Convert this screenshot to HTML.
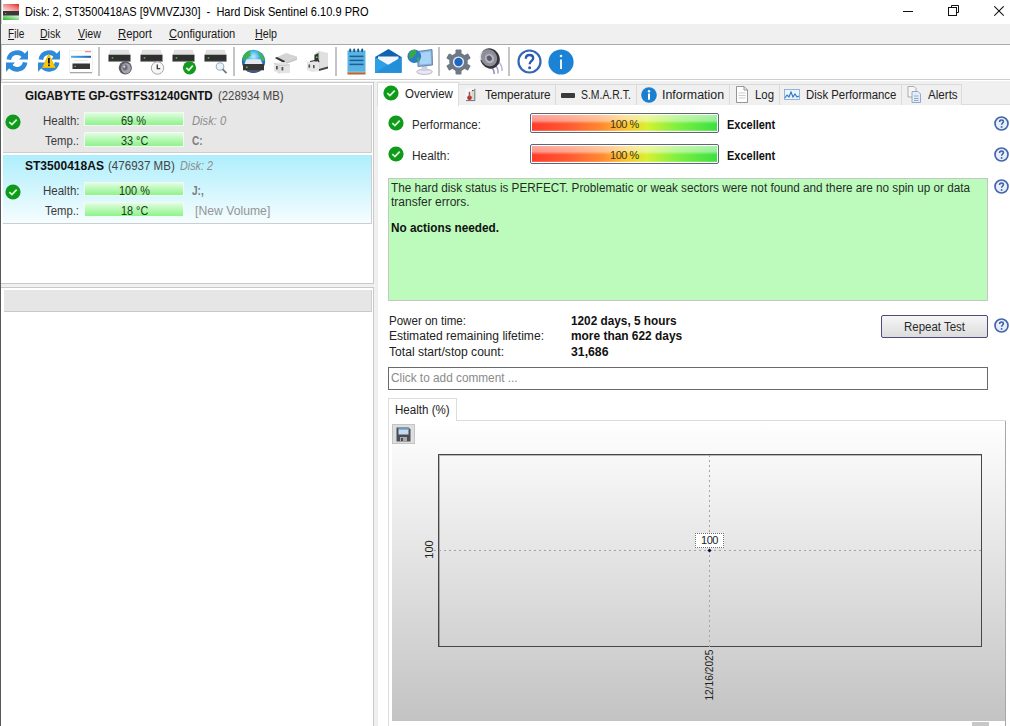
<!DOCTYPE html>
<html><head><meta charset="utf-8">
<style>
*{margin:0;padding:0;box-sizing:border-box}
html,body{width:1010px;height:726px;overflow:hidden;background:#fff;font-family:"Liberation Sans",sans-serif;font-size:12px;color:#000}
.a{position:absolute}
.t{position:absolute;white-space:nowrap;line-height:1}
.bar{position:absolute;width:100px;height:14px;border:1px solid #effcef;background:linear-gradient(#e2fde2 0%,#c4f9c2 35%,#8ef48b 100%)}
.tab{position:absolute;top:84px;height:21px;border:1px solid #dadada;border-bottom:none;background:#f0f0f0}
.sep{position:absolute;top:47px;width:2px;height:29px;background:#c4c4c4}
</style></head><body>
<div class="a" style="left:0;top:0;width:1px;height:726px;background:#55595d"></div>
<div class="a" style="left:1px;top:0;width:1px;height:726px;background:rgba(0,0,0,0.18)"></div>
<svg class="a" style="left:3px;top:4px" width="16" height="16" viewBox="0 0 16 16"><defs><linearGradient id="ti1" x1="0" y1="1" x2="1" y2="0"><stop offset="0" stop-color="#fbe8e8"/><stop offset="0.6" stop-color="#f08080"/><stop offset="1" stop-color="#e42020"/></linearGradient><linearGradient id="ti2" x1="0" y1="1" x2="1" y2="0"><stop offset="0" stop-color="#28b428"/><stop offset="1" stop-color="#e8f8e8"/></linearGradient></defs><rect x="0" y="0" width="16" height="7" fill="url(#ti1)"/><rect x="0" y="7" width="16" height="5" fill="#383838"/><rect x="0" y="11.5" width="16" height="4.5" fill="url(#ti2)"/><rect x="2" y="9" width="1.2" height="1" fill="#8a8"/></svg>
<div class="t" style="left:24.50px;top:6px;font-size:12px;color:#000;transform:scaleX(0.9198);transform-origin:0 0;">Disk: 2, ST3500418AS [9VMVZJ30]&nbsp; -&nbsp; Hard Disk Sentinel 6.10.9 PRO</div>
<div class="a" style="left:903px;top:11px;width:10px;height:1px;background:#111"></div>
<svg class="a" style="left:946px;top:3px" width="14" height="14"><path d="M5.5 4.5V2.5H12.5V9.5H10.5" fill="none" stroke="#111"/><rect x="2.5" y="4.5" width="8" height="8" fill="none" stroke="#111"/></svg>
<svg class="a" style="left:994px;top:6px" width="11" height="11"><path d="M0.3 0.3L9.7 9.7M9.7 0.3L0.3 9.7" stroke="#111" stroke-width="1.05"/></svg>
<div class="a" style="left:1px;top:24px;width:1009px;height:20px;background:#f0f0f0"></div>
<div class="a" style="left:1px;top:44px;width:1009px;height:1px;background:#a9a9a9"></div>
<div class="t" style="left:7.70px;top:28px;font-size:12px;color:#1a1a1a;transform:scaleX(0.8400);transform-origin:0 0;"><span style="text-decoration:underline;text-underline-offset:1px">F</span>ile</div>
<div class="t" style="left:40.40px;top:28px;font-size:12px;color:#1a1a1a;transform:scaleX(0.8761);transform-origin:0 0;"><span style="text-decoration:underline;text-underline-offset:1px">D</span>isk</div>
<div class="t" style="left:78.00px;top:28px;font-size:12px;color:#1a1a1a;transform:scaleX(0.8873);transform-origin:0 0;"><span style="text-decoration:underline;text-underline-offset:1px">V</span>iew</div>
<div class="t" style="left:118.00px;top:28px;font-size:12px;color:#1a1a1a;transform:scaleX(0.9444);transform-origin:0 0;"><span style="text-decoration:underline;text-underline-offset:1px">R</span>eport</div>
<div class="t" style="left:169.40px;top:28px;font-size:12px;color:#1a1a1a;transform:scaleX(0.9286);transform-origin:0 0;"><span style="text-decoration:underline;text-underline-offset:1px">C</span>onfiguration</div>
<div class="t" style="left:254.70px;top:28px;font-size:12px;color:#1a1a1a;transform:scaleX(0.8900);transform-origin:0 0;"><span style="text-decoration:underline;text-underline-offset:1px">H</span>elp</div>
<div class="a" style="left:1px;top:79px;width:1009px;height:1px;background:#cdcdcd"></div>
<svg class="a" style="left:6px;top:50px" width="22" height="22" viewBox="0 0 22 22"><path d="M2.82 9.6A8.3 8.3 0 0 1 18.2 6.85" fill="none" stroke="#2f8bd8" stroke-width="4.6"/><path d="M13 9.6L22 9.6L22 0.3Z" fill="#2f8bd8"/><path d="M19.18 12.4A8.3 8.3 0 0 1 3.8 15.15" fill="none" stroke="#2f8bd8" stroke-width="4.6"/><path d="M9 12.4L0 12.4L0 21.7Z" fill="#2f8bd8"/></svg>
<svg class="a" style="left:38px;top:50px" width="22" height="22" viewBox="0 0 22 22"><path d="M2.82 9.6A8.3 8.3 0 0 1 18.2 6.85" fill="none" stroke="#2f8bd8" stroke-width="4.6"/><path d="M13 9.6L22 9.6L22 0.3Z" fill="#2f8bd8"/><path d="M19.18 12.4A8.3 8.3 0 0 1 3.8 15.15" fill="none" stroke="#2f8bd8" stroke-width="4.6"/><path d="M9 12.4L0 12.4L0 21.7Z" fill="#2f8bd8"/><path d="M10.8 4.5L17 17.5L4.6 17.5Z" fill="#f6c814" stroke="#f0b800" stroke-width="1" stroke-linejoin="round"/><rect x="10" y="8" width="1.8" height="5.5" fill="#1a1a1a"/><rect x="10" y="14.5" width="1.8" height="1.6" fill="#1a1a1a"/></svg>
<svg class="a" style="left:69px;top:50px" width="24" height="24" viewBox="0 0 24 24"><defs><linearGradient id="bl3" x1="0" x2="1"><stop offset="0" stop-color="#48b8e8"/><stop offset="1" stop-color="#1f5fb8"/></linearGradient></defs><rect x="0.5" y="0.5" width="23" height="22" fill="#fdfdfd" stroke="#f0f0f0"/><rect x="16" y="1.2" width="6" height="1" fill="#e87070"/><rect x="2" y="5.8" width="20" height="2" fill="url(#bl3)"/><rect x="5" y="10" width="14" height="0.8" fill="#e8e8e8"/><rect x="3.5" y="13.5" width="17.5" height="5.5" fill="#363636"/><rect x="5.5" y="15.8" width="1.3" height="1.3" fill="#6c6"/><rect x="1" y="22" width="22" height="1.3" fill="#a8a8a8"/></svg>
<div class="sep" style="left:98px"></div>
<svg class="a" style="left:108px;top:49px" width="25" height="26" viewBox="0 0 25 26"><path d="M2.3 0.8L20.7 0.8L22.3 5.7L0.7 5.7Z" fill="#e0e0e0"/><rect x="0.5" y="5.7" width="22" height="6.8" fill="#2f2f2f"/><rect x="0.5" y="11.9" width="22" height="0.8" fill="#8a8a8a"/><rect x="3.7" y="8.1" width="1.6" height="1.6" fill="#4fb84f"/><circle cx="17.3" cy="18.8" r="6.6" fill="#5a5a62"/><ellipse cx="18" cy="19.2" rx="4.8" ry="5.2" fill="#a4a4ae"/><ellipse cx="17" cy="18.5" rx="2.6" ry="3" fill="#6e6e78"/><ellipse cx="16.2" cy="17.6" rx="1.1" ry="1.2" fill="#d8d8de"/></svg>
<svg class="a" style="left:140px;top:49px" width="25" height="26" viewBox="0 0 25 26"><path d="M2.3 0.8L20.7 0.8L22.3 5.7L0.7 5.7Z" fill="#e0e0e0"/><rect x="0.5" y="5.7" width="22" height="6.8" fill="#2f2f2f"/><rect x="0.5" y="11.9" width="22" height="0.8" fill="#8a8a8a"/><rect x="3.7" y="8.1" width="1.6" height="1.6" fill="#4fb84f"/><circle cx="17.5" cy="19" r="6.2" fill="#f6f6f6" stroke="#a8a8a8" stroke-width="1"/><path d="M17.3 15.5V19.6H20.2" fill="none" stroke="#3a3a3a" stroke-width="1.3"/></svg>
<svg class="a" style="left:172px;top:49px" width="25" height="26" viewBox="0 0 25 26"><path d="M2.3 0.8L20.7 0.8L22.3 5.7L0.7 5.7Z" fill="#e0e0e0"/><rect x="0.5" y="5.7" width="22" height="6.8" fill="#2f2f2f"/><rect x="0.5" y="11.9" width="22" height="0.8" fill="#8a8a8a"/><rect x="3.7" y="8.1" width="1.6" height="1.6" fill="#4fb84f"/><circle cx="17.5" cy="18.8" r="6.6" fill="#139a1e"/><path d="M14.3 18.9L16.7 21.2L20.8 16.6" fill="none" stroke="#e4fbe2" stroke-width="1.7"/></svg>
<svg class="a" style="left:204px;top:49px" width="25" height="26" viewBox="0 0 25 26"><path d="M2.3 0.8L20.7 0.8L22.3 5.7L0.7 5.7Z" fill="#e0e0e0"/><rect x="0.5" y="5.7" width="22" height="6.8" fill="#2f2f2f"/><rect x="0.5" y="11.9" width="22" height="0.8" fill="#8a8a8a"/><rect x="3.7" y="8.1" width="1.6" height="1.6" fill="#4fb84f"/><circle cx="16" cy="17.5" r="3.8" fill="#eaf2fb" stroke="#9ab0c8" stroke-width="1.1"/><path d="M18.6 20.2L22.5 24.2" stroke="#777" stroke-width="1.8"/></svg>
<div class="sep" style="left:233px"></div>
<svg class="a" style="left:241px;top:49px" width="25" height="26" viewBox="0 0 25 26"><defs><radialGradient id="glb" cx="0.5" cy="0.3" r="0.65"><stop offset="0" stop-color="#b8f0ff"/><stop offset="0.45" stop-color="#36a8e0"/><stop offset="1" stop-color="#1a4a98"/></radialGradient></defs><circle cx="12.5" cy="12.3" r="11.6" fill="url(#glb)"/><path d="M1.5 10C2.5 5 6 2 9 1.5C10 3 8.5 5 10 6.5C8 8 5 9 3 12Z" fill="#3cb43c" opacity="0.9"/><path d="M17 2.5C20 4 23 7.5 23.8 11.5C22 12.5 20 11 19.5 8.5C18.5 6.5 16.5 5 17 2.5Z" fill="#48b848" opacity="0.9"/><path d="M3.5 15L5.5 10.3L19.5 10.3L21.5 15Z" fill="#e4e8ec"/><rect x="2" y="15" width="21" height="6.3" fill="#363636"/><rect x="5" y="17.5" width="1.6" height="1.6" fill="#50c050"/><path d="M4.5 21.3C8 24.5 17 24.5 20.5 21.3Z" fill="#4a5a70"/></svg>
<svg class="a" style="left:273px;top:52px" width="25" height="23" viewBox="0 0 25 23"><path d="M2 6L13 1L24 4.5L24 8L13 12Z" fill="#d4d4d4"/><path d="M2 6L13 11L24 7" fill="none" stroke="#bbb" stroke-width="0.8"/><path d="M2 6L4 5L12 9L11 11Z" fill="#333"/><path d="M1 11L12 10L17 13L17 21L6 21.5L1 19Z" fill="#e4e4e4"/><path d="M1 11L6 13.5L17 13" fill="none" stroke="#c4c4c4" stroke-width="0.8"/><rect x="3" y="14" width="1.8" height="3.5" fill="#555"/><rect x="8.5" y="15" width="1.8" height="3.5" fill="#555"/><path d="M6 13.5V21.5" stroke="#cfcfcf" stroke-width="0.8"/></svg>
<svg class="a" style="left:306px;top:50px" width="25" height="24" viewBox="0 0 25 24"><path d="M8 4L13 1L22 3L22 17L13 20L8 17Z" fill="#e0e0e0"/><path d="M13 1V20" stroke="#c8c8c8" stroke-width="0.8"/><path d="M8.5 5L12.5 3L12.5 11L8.5 12Z" fill="#2a3a2a"/><rect x="10" y="6.5" width="1.5" height="1.5" fill="#6c6"/><path d="M1 12L8 11L13 13L13 21L6 22L1 20Z" fill="#e6e6e6"/><path d="M4 11.5L12 10L13 12" fill="none" stroke="#333" stroke-width="1.2"/><rect x="2.5" y="14.5" width="1.6" height="3.2" fill="#555"/><rect x="7" y="15" width="1.6" height="3.2" fill="#555"/><path d="M13 19L22 16.5V18.5L13 21Z" fill="#444"/></svg>
<div class="sep" style="left:335px"></div>
<svg class="a" style="left:346px;top:48px" width="21" height="27" viewBox="0 0 21 27"><rect x="1.5" y="2.5" width="18" height="22.5" fill="#58b4e4"/><rect x="1.5" y="23.8" width="18" height="1.6" fill="#f0f0f0"/><rect x="1.5" y="24.3" width="18" height="2.2" fill="#b06a32"/><rect x="3.3" y="0.6" width="1.8" height="3.6" rx="0.9" fill="#1f4f7a"/><rect x="7.3" y="0.6" width="1.8" height="3.6" rx="0.9" fill="#1f4f7a"/><rect x="11.3" y="0.6" width="1.8" height="3.6" rx="0.9" fill="#1f4f7a"/><rect x="15.3" y="0.6" width="1.8" height="3.6" rx="0.9" fill="#1f4f7a"/><rect x="3.5" y="7.6" width="14" height="1.6" fill="#1f5f95"/><rect x="3.5" y="11.6" width="14" height="1.6" fill="#1f5f95"/><rect x="3.5" y="15.6" width="14" height="1.6" fill="#1f5f95"/></svg>
<svg class="a" style="left:375px;top:48px" width="27" height="26" viewBox="0 0 27 26"><path d="M0 9L13.5 1L26.5 9L26.5 24.8L0 24.8Z" fill="#0f64b0"/><path d="M3 8.5L23.5 8.5L23.5 17L13.5 22L3 17Z" fill="#f2f6fb"/><path d="M0 9L13.5 17L26.5 9L26.5 24.8L0 24.8Z" fill="#2e9fe6"/><path d="M0 24.8L26.5 24.8L13.5 16.5Z" fill="#2590da"/><path d="M13.5 16.5L26.5 24.8L26.5 9Z" fill="#1c7fcc" opacity="0.55"/></svg>
<svg class="a" style="left:407px;top:48px" width="27" height="27" viewBox="0 0 27 27"><ellipse cx="17.5" cy="23.8" rx="7.8" ry="2.6" fill="#e8e8f2" stroke="#a8a8c0" stroke-width="0.8"/><path d="M15 17.5L20 17.5L21 23L14 23Z" fill="#d0d0e4"/><path d="M10.5 3.5L25 1.5L25.5 17L11 18.5Z" fill="#8ab4dc" stroke="#5a7aa8" stroke-width="0.9"/><path d="M12.5 5L23.5 3.5L24 15.5L13 16.5Z" fill="#a8d4f8"/><circle cx="7.3" cy="8.3" r="6.8" fill="#2a7cc8"/><path d="M2 6C3 3 6 1.5 8.5 1.8C10 3 9.5 5.5 8 7C6.5 8.5 5 11.5 2.5 11Z" fill="#3aa845"/><path d="M10 9C12 9 13 11 12.5 13L10 13Z" fill="#3aa845"/></svg>
<div class="sep" style="left:438px"></div>
<svg class="a" style="left:445px;top:49px" width="27" height="26" viewBox="0 0 27 26"><rect x="10.5" y="0.5" width="6" height="6" rx="1" fill="#6f7985" transform="rotate(0 13.5 13)"/><rect x="10.5" y="0.5" width="6" height="6" rx="1" fill="#6f7985" transform="rotate(60 13.5 13)"/><rect x="10.5" y="0.5" width="6" height="6" rx="1" fill="#6f7985" transform="rotate(120 13.5 13)"/><rect x="10.5" y="0.5" width="6" height="6" rx="1" fill="#6f7985" transform="rotate(180 13.5 13)"/><rect x="10.5" y="0.5" width="6" height="6" rx="1" fill="#6f7985" transform="rotate(240 13.5 13)"/><rect x="10.5" y="0.5" width="6" height="6" rx="1" fill="#6f7985" transform="rotate(300 13.5 13)"/><circle cx="13.5" cy="13" r="9.3" fill="#6f7985"/><circle cx="13.5" cy="13" r="5.6" fill="#e8eef4"/><circle cx="13.5" cy="13" r="4.2" fill="#1f66c2"/></svg>
<svg class="a" style="left:478px;top:48px" width="26" height="27" viewBox="0 0 26 27"><path d="M13 19C15.5 21 16.5 23 16 26" fill="none" stroke="#9090c0" stroke-width="1.6"/><path d="M17 17C19.5 19.5 20.5 22 20 25.5" fill="none" stroke="#a4a4d0" stroke-width="1.5"/><path d="M20.5 13.5C23 16.5 24.5 19.5 24 23" fill="none" stroke="#b4b4dc" stroke-width="1.4"/><ellipse cx="12" cy="10.5" rx="9.5" ry="10.5" transform="rotate(-35 12 10.5)" fill="#35353c"/><ellipse cx="11" cy="9.8" rx="7.8" ry="8.8" transform="rotate(-35 11 9.8)" fill="#8e8e98"/><ellipse cx="11.5" cy="10.5" rx="4.5" ry="5" transform="rotate(-35 11.5 10.5)" fill="#b4b4c0"/><ellipse cx="11.3" cy="10.3" rx="2.4" ry="2.8" transform="rotate(-35 11.3 10.3)" fill="#5c5c68"/><path d="M4 4C2 6.5 2 9.5 3 12" fill="none" stroke="#e4e4ec" stroke-width="1.4"/></svg>
<div class="sep" style="left:508px"></div>
<svg class="a" style="left:517px;top:49px" width="25" height="25" viewBox="0 0 25 25"><circle cx="12.5" cy="12.5" r="11" fill="#fff" stroke="#3266b8" stroke-width="2.2"/><path d="M8.8 9.8C8.8 7.2 10.5 6 12.5 6C14.6 6 16.2 7.3 16.2 9.3C16.2 11.7 12.6 12.1 12.6 15.3" fill="none" stroke="#2a5aa8" stroke-width="2.3"/><circle cx="12.6" cy="18.7" r="1.5" fill="#2a5aa8"/></svg>
<svg class="a" style="left:548px;top:49px" width="26" height="26" viewBox="0 0 26 26"><circle cx="13" cy="13" r="12.6" fill="#1c82d6"/><rect x="12" y="10.5" width="2" height="9.5" fill="#e8f4ff"/><circle cx="13" cy="7" r="1.3" fill="#e8f4ff"/></svg>
<div class="a" style="left:1px;top:81px;width:373px;height:646px;background:#f0f0f0"></div>
<div class="a" style="left:1px;top:82px;width:373px;height:202px;border:1px solid #c9c9c9;border-left:none;background:#fff"></div>
<div class="a" style="left:3px;top:85px;width:369px;height:68px;background:#e7e7e7;border-right:1px solid #cdcdcd;border-bottom:1px solid #cdcdcd"></div>
<div class="a" style="left:3px;top:155px;width:369px;height:69px;background:linear-gradient(#aeeefc,#f6fdff);border-right:1px solid #cdcdcd;border-bottom:1px solid #cdcdcd"></div>
<div class="t" style="left:25.30px;top:90px;font-size:12px;color:#111;transform:scaleX(0.9638);transform-origin:0 0;font-weight:bold;">GIGABYTE GP-GSTFS31240GNTD</div>
<div class="t" style="left:217.90px;top:90px;font-size:12px;color:#444;transform:scaleX(0.9443);transform-origin:0 0;">(228934 MB)</div>
<svg class="a" style="left:5px;top:114px" width="16" height="16" viewBox="0 0 16 16"><circle cx="8" cy="8" r="7.6" fill="#109a1c"/><path d="M4.3 8.2L6.9 10.6L11.7 5.6" fill="none" stroke="#d9fbd6" stroke-width="1.7"/></svg>
<div class="t" style="left:42.50px;top:115px;font-size:12px;color:#3a3a3a;transform:scaleX(0.9595);transform-origin:0 0;">Health:</div>
<div class="bar" style="left:84px;top:112px;height:14px"></div>
<div class="t" style="left:121.30px;top:115px;font-size:12px;color:#1a401a;transform:scaleX(0.9137);transform-origin:0 0;">69 %</div>
<div class="t" style="left:191.80px;top:115px;font-size:12px;color:#8c8c8c;transform:scaleX(0.9314);transform-origin:0 0;font-style:italic;">Disk: 0</div>
<div class="t" style="left:45.00px;top:135px;font-size:12px;color:#3a3a3a;transform:scaleX(0.9444);transform-origin:0 0;">Temp.:</div>
<div class="bar" style="left:84px;top:132px;height:15px"></div>
<div class="t" style="left:120.50px;top:135px;font-size:12px;color:#1a401a;transform:scaleX(0.9064);transform-origin:0 0;">33 °C</div>
<div class="t" style="left:191.80px;top:135px;font-size:12px;color:#7c7c7c;transform:scaleX(0.8400);transform-origin:0 0;font-weight:bold;">C:</div>
<div class="t" style="left:25.30px;top:160px;font-size:12px;color:#111;transform:scaleX(1.0023);transform-origin:0 0;font-weight:bold;">ST3500418AS</div>
<div class="t" style="left:107.70px;top:160px;font-size:12px;color:#444;transform:scaleX(0.9631);transform-origin:0 0;">(476937 MB)</div>
<div class="t" style="left:180.00px;top:160px;font-size:12px;color:#8c8c8c;transform:scaleX(0.8987);transform-origin:0 0;font-style:italic;">Disk: 2</div>
<svg class="a" style="left:5px;top:184px" width="16" height="16" viewBox="0 0 16 16"><circle cx="8" cy="8" r="7.6" fill="#109a1c"/><path d="M4.3 8.2L6.9 10.6L11.7 5.6" fill="none" stroke="#d9fbd6" stroke-width="1.7"/></svg>
<div class="t" style="left:42.50px;top:185px;font-size:12px;color:#3a3a3a;transform:scaleX(0.9595);transform-origin:0 0;">Health:</div>
<div class="bar" style="left:84px;top:182px;height:14px"></div>
<div class="t" style="left:118.80px;top:185px;font-size:12px;color:#1a401a;transform:scaleX(0.9067);transform-origin:0 0;">100 %</div>
<div class="t" style="left:191.60px;top:185px;font-size:12px;color:#7c7c7c;transform:scaleX(0.8400);transform-origin:0 0;font-weight:bold;">J:,</div>
<div class="t" style="left:45.00px;top:205px;font-size:12px;color:#3a3a3a;transform:scaleX(0.9444);transform-origin:0 0;">Temp.:</div>
<div class="bar" style="left:84px;top:202px;height:15px"></div>
<div class="t" style="left:120.60px;top:205px;font-size:12px;color:#1a401a;transform:scaleX(0.9064);transform-origin:0 0;">18 °C</div>
<div class="t" style="left:194.70px;top:205px;font-size:12px;color:#959595;transform:scaleX(1.0170);transform-origin:0 0;">[New Volume]</div>
<div class="a" style="left:1px;top:287px;width:373px;height:440px;border:1px solid #c9c9c9;border-left:none;border-bottom:none;background:#fff"></div>
<div class="a" style="left:4px;top:290px;width:368px;height:22px;background:#e6e6e6;border-bottom:1px solid #c9c9c9;border-right:1px solid #d0d0d0"></div>
<div class="a" style="left:374px;top:81px;width:636px;height:646px;background:#f0f0f0"></div>
<div class="a" style="left:377px;top:104px;width:633px;height:622px;background:#fff;border-left:1px solid #ececec;border-top:1px solid #dcdcdc"></div>
<div class="tab" style="left:458px;width:98px"></div>
<div class="tab" style="left:555px;width:82px"></div>
<div class="tab" style="left:636px;width:94px"></div>
<div class="tab" style="left:729px;width:51px"></div>
<div class="tab" style="left:779px;width:123px"></div>
<div class="tab" style="left:901px;width:61px"></div>
<div class="a" style="left:377px;top:82px;width:82px;height:24px;background:#fff;border:1px solid #dcdcdc;border-bottom:none"></div>
<svg class="a" style="left:383px;top:85px" width="16" height="16" viewBox="0 0 16 16"><circle cx="8" cy="8" r="7.6" fill="#109a1c"/><path d="M4.3 8.2L6.9 10.6L11.7 5.6" fill="none" stroke="#d9fbd6" stroke-width="1.7"/></svg>
<div class="t" style="left:404.70px;top:88px;font-size:12px;color:#222;transform:scaleX(0.9569);transform-origin:0 0;">Overview</div>
<svg class="a" style="left:464px;top:87px" width="13" height="15" viewBox="0 0 13 15"><rect x="1.5" y="1.5" width="9" height="12" fill="#f4f6fa"/><path d="M10.8 1.8V13.6H2" fill="none" stroke="#6a6a7a" stroke-width="1"/><rect x="7.5" y="3.5" width="2.3" height="9" fill="#c8dcb8"/><rect x="8" y="3" width="1.6" height="1" fill="#444"/><circle cx="5.5" cy="10.8" r="2.3" fill="#b02c2c"/><rect x="4.7" y="4.8" width="1.6" height="6" fill="#c04848"/></svg>
<div class="t" style="left:484.50px;top:89px;font-size:12px;color:#222;transform:scaleX(0.9730);transform-origin:0 0;">Temperature</div>
<div class="a" style="left:561px;top:93px;width:14px;height:5px;background:#3a3a3a;border-radius:1px"></div>
<div class="t" style="left:581.00px;top:89px;font-size:12px;color:#222;transform:scaleX(0.8682);transform-origin:0 0;">S.M.A.R.T.</div>
<svg class="a" style="left:641px;top:87px" width="16" height="16" viewBox="0 0 16 16"><circle cx="8" cy="8" r="7.8" fill="#1a7fd0"/><rect x="7" y="6.5" width="2" height="6.2" fill="#fff"/><circle cx="8" cy="4.2" r="1.2" fill="#fff"/></svg>
<div class="t" style="left:662.00px;top:89px;font-size:12px;color:#222;transform:scaleX(1.0333);transform-origin:0 0;">Information</div>
<svg class="a" style="left:735px;top:86px" width="14" height="17" viewBox="0 0 14 17"><path d="M1.5 0.5H9L12.5 4V16.5H1.5Z" fill="#fff" stroke="#8a8a8a" stroke-width="0.9"/><path d="M9 0.5V4H12.5" fill="none" stroke="#8a8a8a" stroke-width="0.9"/><path d="M3.5 7H10.5M3.5 9.5H10.5M3.5 12H10.5" stroke="#c0c0c0" stroke-width="0.8"/></svg>
<div class="t" style="left:755.00px;top:89px;font-size:12px;color:#222;transform:scaleX(0.9481);transform-origin:0 0;">Log</div>
<svg class="a" style="left:784px;top:89px" width="16" height="11" viewBox="0 0 16 11"><rect x="0.5" y="0.5" width="15" height="10" fill="#eef4fb" stroke="#7aa6d6" stroke-width="0.8"/><path d="M1 9L3 6L5 8L7 3L9 8L11 5L13 8L15 7" fill="none" stroke="#2a78c8" stroke-width="1.1"/></svg>
<div class="t" style="left:805.60px;top:89px;font-size:12px;color:#222;transform:scaleX(0.9476);transform-origin:0 0;">Disk Performance</div>
<svg class="a" style="left:907px;top:86px" width="15" height="17" viewBox="0 0 15 17"><path d="M1 0.5H7L9 2.5V11H1Z" fill="#f6f6f6" stroke="#9a9a9a" stroke-width="0.8"/><path d="M5 5.5H11L13.5 8V16.5H5Z" fill="#e4eefa" stroke="#7a9ac0" stroke-width="0.8"/><path d="M7 10H11.5M7 12.5H11.5M7 14.5H11.5" stroke="#6a8ab0" stroke-width="0.7"/></svg>
<div class="t" style="left:928.00px;top:89px;font-size:12px;color:#222;transform:scaleX(0.9668);transform-origin:0 0;">Alerts</div>
<svg class="a" style="left:388px;top:115px" width="16" height="16" viewBox="0 0 16 16"><circle cx="8" cy="8" r="7.6" fill="#109a1c"/><path d="M4.3 8.2L6.9 10.6L11.7 5.6" fill="none" stroke="#d9fbd6" stroke-width="1.7"/></svg>
<div class="t" style="left:411.70px;top:119px;font-size:12px;color:#2a2a2a;transform:scaleX(0.9569);transform-origin:0 0;">Performance:</div>
<svg class="a" style="left:388px;top:146px" width="16" height="16" viewBox="0 0 16 16"><circle cx="8" cy="8" r="7.6" fill="#109a1c"/><path d="M4.3 8.2L6.9 10.6L11.7 5.6" fill="none" stroke="#d9fbd6" stroke-width="1.7"/></svg>
<div class="t" style="left:411.70px;top:150px;font-size:12px;color:#2a2a2a;transform:scaleX(0.9911);transform-origin:0 0;">Health:</div>
<div class="a" style="left:530px;top:113px;width:189px;height:20px;border:1px solid #5e6670;border-radius:2px;background:#fff;padding:1px">
<div style="width:100%;height:100%;background:linear-gradient(90deg,#ff3a2a 0%,#ff5a30 20%,#ff8a30 38%,#ffc030 50%,#d8f030 62%,#80f040 78%,#3ae040 100%)"><div style="width:100%;height:100%;background:linear-gradient(rgba(255,255,255,0.55) 0%,rgba(255,255,255,0.45) 35%,rgba(255,255,255,0) 55%,rgba(255,255,255,0) 90%,rgba(255,255,255,0.25) 100%)"></div></div></div>
<div class="t" style="left:610.00px;top:119px;font-size:11px;color:#3a3a10;letter-spacing:-0.450px;">100 %</div>
<div class="t" style="left:727.40px;top:119px;font-size:12px;color:#111;transform:scaleX(0.9150);transform-origin:0 0;font-weight:bold;">Excellent</div>
<div class="a" style="left:530px;top:144px;width:189px;height:20px;border:1px solid #5e6670;border-radius:2px;background:#fff;padding:1px">
<div style="width:100%;height:100%;background:linear-gradient(90deg,#ff3a2a 0%,#ff5a30 20%,#ff8a30 38%,#ffc030 50%,#d8f030 62%,#80f040 78%,#3ae040 100%)"><div style="width:100%;height:100%;background:linear-gradient(rgba(255,255,255,0.55) 0%,rgba(255,255,255,0.45) 35%,rgba(255,255,255,0) 55%,rgba(255,255,255,0) 90%,rgba(255,255,255,0.25) 100%)"></div></div></div>
<div class="t" style="left:610.00px;top:150px;font-size:11px;color:#3a3a10;letter-spacing:-0.450px;">100 %</div>
<div class="t" style="left:727.40px;top:150px;font-size:12px;color:#111;transform:scaleX(0.9150);transform-origin:0 0;font-weight:bold;">Excellent</div>
<svg class="a" style="left:993.5px;top:116px" width="15" height="15" viewBox="0 0 15 15"><circle cx="7.5" cy="7.5" r="6.5" fill="#e6eefa" stroke="#4466aa" stroke-width="1.7"/><path d="M5.6 5.9C5.6 4.6 6.5 3.9 7.5 3.9C8.6 3.9 9.4 4.6 9.4 5.6C9.4 6.9 7.6 7.1 7.6 8.8" fill="none" stroke="#3a5ea8" stroke-width="1.5"/><circle cx="7.6" cy="10.9" r="0.95" fill="#3a5ea8"/></svg>
<svg class="a" style="left:993.5px;top:147px" width="15" height="15" viewBox="0 0 15 15"><circle cx="7.5" cy="7.5" r="6.5" fill="#e6eefa" stroke="#4466aa" stroke-width="1.7"/><path d="M5.6 5.9C5.6 4.6 6.5 3.9 7.5 3.9C8.6 3.9 9.4 4.6 9.4 5.6C9.4 6.9 7.6 7.1 7.6 8.8" fill="none" stroke="#3a5ea8" stroke-width="1.5"/><circle cx="7.6" cy="10.9" r="0.95" fill="#3a5ea8"/></svg>
<div class="a" style="left:388px;top:178px;width:600px;height:123px;background:#bdfbbd;border:1px solid #c2c8c2"></div>
<div class="t" style="left:391.00px;top:182px;font-size:12px;color:#1f2f1f;transform:scaleX(0.9775);transform-origin:0 0;">The hard disk status is PERFECT. Problematic or weak sectors were not found and there are no spin up or data</div>
<div class="t" style="left:391.00px;top:196px;font-size:12px;color:#1f2f1f;">transfer errors.</div>
<div class="t" style="left:391.00px;top:222px;font-size:12px;color:#111;transform:scaleX(0.9815);transform-origin:0 0;font-weight:bold;">No actions needed.</div>
<svg class="a" style="left:993.5px;top:179px" width="15" height="15" viewBox="0 0 15 15"><circle cx="7.5" cy="7.5" r="6.5" fill="#e6eefa" stroke="#4466aa" stroke-width="1.7"/><path d="M5.6 5.9C5.6 4.6 6.5 3.9 7.5 3.9C8.6 3.9 9.4 4.6 9.4 5.6C9.4 6.9 7.6 7.1 7.6 8.8" fill="none" stroke="#3a5ea8" stroke-width="1.5"/><circle cx="7.6" cy="10.9" r="0.95" fill="#3a5ea8"/></svg>
<div class="t" style="left:388.90px;top:315px;font-size:12px;color:#222;transform:scaleX(0.9620);transform-origin:0 0;">Power on time:</div>
<div class="t" style="left:388.90px;top:330px;font-size:12px;color:#222;transform:scaleX(1.0060);transform-origin:0 0;">Estimated remaining lifetime:</div>
<div class="t" style="left:388.90px;top:346px;font-size:12px;color:#222;transform:scaleX(1.0088);transform-origin:0 0;">Total start/stop count:</div>
<div class="t" style="left:570.80px;top:315px;font-size:12px;color:#111;transform:scaleX(0.9832);transform-origin:0 0;font-weight:bold;">1202 days, 5 hours</div>
<div class="t" style="left:570.80px;top:330px;font-size:12px;color:#111;transform:scaleX(0.9921);transform-origin:0 0;font-weight:bold;">more than 622 days</div>
<div class="t" style="left:570.80px;top:346px;font-size:12px;color:#111;transform:scaleX(1.0212);transform-origin:0 0;font-weight:bold;">31,686</div>
<div class="a" style="left:881px;top:315px;width:107px;height:23px;border:1px solid #4c4c78;border-radius:2px;background:linear-gradient(#f6f6f6,#dcdcdc)"></div>
<div class="t" style="left:904.00px;top:321px;font-size:12px;color:#2a2a2a;transform:scaleX(0.9555);transform-origin:0 0;">Repeat Test</div>
<svg class="a" style="left:993.5px;top:318px" width="15" height="15" viewBox="0 0 15 15"><circle cx="7.5" cy="7.5" r="6.5" fill="#e6eefa" stroke="#4466aa" stroke-width="1.7"/><path d="M5.6 5.9C5.6 4.6 6.5 3.9 7.5 3.9C8.6 3.9 9.4 4.6 9.4 5.6C9.4 6.9 7.6 7.1 7.6 8.8" fill="none" stroke="#3a5ea8" stroke-width="1.5"/><circle cx="7.6" cy="10.9" r="0.95" fill="#3a5ea8"/></svg>
<div class="a" style="left:388px;top:367px;width:600px;height:23px;border:1px solid #6a6a6a;background:#fff"></div>
<div class="t" style="left:390.60px;top:372px;font-size:12px;color:#8a8a8a;transform:scaleX(0.9840);transform-origin:0 0;">Click to add comment ...</div>
<div class="a" style="left:388px;top:420px;width:618px;height:1px;background:#dcdcdc"></div>
<div class="a" style="left:388px;top:398px;width:69px;height:23px;background:#fff;border:1px solid #dcdcdc;border-bottom:none"></div>
<div class="t" style="left:395.40px;top:404px;font-size:12px;color:#222;transform:scaleX(0.9640);transform-origin:0 0;">Health (%)</div>
<div class="a" style="left:388px;top:421px;width:1px;height:305px;background:#dcdcdc"></div>
<div class="a" style="left:1005px;top:421px;width:1px;height:305px;background:#a8a8a8"></div>
<div class="a" style="left:392px;top:421px;width:613px;height:300px;background:linear-gradient(#ffffff,#c3c3c3)"></div>
<div class="a" style="left:972px;top:722px;width:17px;height:4px;background:#c8c8c8"></div>
<div class="a" style="left:392px;top:424px;width:23px;height:20px;background:#dedede;border:1px solid #c4c4c4"></div>
<svg class="a" style="left:396px;top:427px" width="15" height="15" viewBox="0 0 15 15"><path d="M0.5 0.5H12.5L14.5 2.5V14.5H0.5Z" fill="#4a4f55"/><rect x="2.5" y="1.5" width="10" height="6" fill="#c8dcef"/><rect x="2.5" y="1.5" width="10" height="1.2" fill="#5aa0e0"/><rect x="4" y="10" width="7" height="4.5" fill="#a8aaac"/><rect x="5" y="11" width="2" height="3" fill="#4a4f55"/></svg>
<div class="a" style="left:438px;top:454px;width:544px;height:193px;border:1px solid #474747;box-shadow:inset 1px 1px 0 rgba(0,0,0,0.25)"></div>
<div class="a" style="left:434px;top:550px;width:547px;height:1px;background:repeating-linear-gradient(90deg,#a4a4a4 0 2px,transparent 2px 5px)"></div>
<div class="a" style="left:709px;top:455px;width:1px;height:196px;background:repeating-linear-gradient(180deg,#a4a4a4 0 2px,transparent 2px 5px)"></div>
<div class="a" style="left:695px;top:533px;width:29px;height:15px;background:#fff;border:1px dotted #707070"></div>
<div class="t" style="left:701.00px;top:535px;font-size:11px;color:#222;letter-spacing:-0.450px;">100</div>
<div class="a" style="left:707.5px;top:549px;width:3px;height:3px;background:#0a0a40;transform:rotate(45deg)"></div>
<div class="t" style="left:420px;top:544px;font-size:11px;color:#222;transform:rotate(-90deg);transform-origin:center">100</div>
<div class="t" style="left:684.5px;top:670px;font-size:10.2px;color:#222;transform:rotate(-90deg);transform-origin:center">12/16/2025</div>
</body></html>
